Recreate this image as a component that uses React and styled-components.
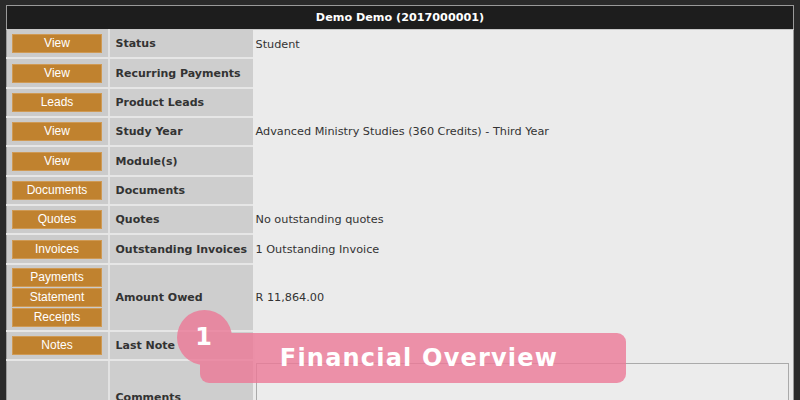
import styled, { createGlobalStyle } from 'styled-components';

const GlobalStyle = createGlobalStyle`
  html, body {
    margin: 0;
    padding: 0;
    background: #2a2a2a;
  }
  body {
    font-family: "DejaVu Sans", Verdana, sans-serif;
  }
`;

const rows = [
    { buttons: ['View'], label: 'Status', value: 'Student' },
    { buttons: ['View'], label: 'Recurring Payments', value: '' },
    { buttons: ['Leads'], label: 'Product Leads', value: '' },
    { buttons: ['View'], label: 'Study Year', value: 'Advanced Ministry Studies (360 Credits) - Third Year' },
    { buttons: ['View'], label: 'Module(s)', value: '' },
    { buttons: ['Documents'], label: 'Documents', value: '' },
    { buttons: ['Quotes'], label: 'Quotes', value: 'No outstanding quotes' },
    { buttons: ['Invoices'], label: 'Outstanding Invoices', value: '1 Outstanding Invoice' },
    { buttons: ['Payments', 'Statement', 'Receipts'], label: 'Amount Owed', value: 'R 11,864.00' },
    { buttons: ['Notes'], label: 'Last Note', value: '' },
]

const Page = styled.div`
    position: relative;
    width: 800px;
    height: 400px;
    overflow: hidden;
    padding: 5px 6px 0;
    box-sizing: border-box;
`;

const Table = styled.table`
    width: 100%;
    table-layout: fixed;
    border-collapse: collapse;
    border: 1px solid #9a9a9a;
    border-bottom: none;
    color: #333;
`;

const Col = styled.col`
    width: ${p => p.$w ? p.$w + 'px' : 'auto'};
`;

const Header = styled.th`
    background: #1d1d1d;
    color: #fff;
    font-weight: bold;
    font-size: 11.2px;
    height: 23px;
    padding: 0;
    text-align: center;
    border-bottom: 1px solid #c8c8c8;
`;

const ButtonCell = styled.td`
    background: #cbcbcb;
    border-bottom: 2px solid #e6e6e6;
    border-right: 2px solid #e2e2e2;
    padding: 0 0 0 5px;
    height: 27.35px;
    vertical-align: middle;
`;

const LabelCell = styled.td`
    background: #cecece;
    border-bottom: 2px solid #e6e6e6;
    padding: ${p => p.$top ? '30px 0 0 6px' : '0 0 0 6px'};
    vertical-align: ${p => p.$top ? 'top' : 'middle'};
    font-weight: bold;
    font-size: 11px;
    color: #333;
    white-space: nowrap;
`;

const ValueCell = styled.td`
    background: #ebebeb;
    padding: 0 0 0 3px;
    color: #333;
    font-size: 11.25px;
    white-space: nowrap;
`;

const ButtonStack = styled.div`
    display: flex;
    flex-direction: column;
    gap: 1px;
    padding: ${p => p.$multi ? '3px 0' : '0'};
`;

const OrangeButton = styled.div`
    width: 88px;
    height: 17px;
    line-height: 17px;
    background: #c0822f;
    border: 1px solid #cf9a55;
    color: #fff;
    font-family: "Liberation Sans", Arial, sans-serif;
    font-size: 12px;
    text-align: center;
`;

const CommentBox = styled.div`
    margin: 3px 4px 0 0;
    height: 60px;
    border: 1px solid #aaa;
    background: #ececec;
`;

const Callout = styled.div`
    position: absolute;
    left: 177px;
    top: 310px;
    width: 450px;
    height: 74px;
`;

const Shapes = styled.div`
    position: absolute;
    inset: 0;
    opacity: 0.8;
`;

const Circle = styled.div`
    position: absolute;
    left: 0;
    top: 0;
    width: 55px;
    height: 55px;
    border-radius: 50%;
    background: #ec7997;
`;

const Bar = styled.div`
    position: absolute;
    left: 23px;
    top: 23px;
    width: 426px;
    height: 50px;
    border-radius: 9px;
    background: #ec7997;
`;

const Number = styled.div`
    position: absolute;
    left: 0;
    top: 0;
    width: 53px;
    height: 53px;
    display: flex;
    align-items: center;
    justify-content: center;
    color: #fff;
    font-weight: bold;
    font-size: 24px;
`;

const Title = styled.div`
    position: absolute;
    left: 23px;
    top: 23px;
    width: 426px;
    height: 50px;
    display: flex;
    align-items: center;
    justify-content: center;
    padding: 0 0 0 12px;
    box-sizing: border-box;
    color: #fff;
    font-weight: bold;
    font-size: 24px;
    letter-spacing: 1.2px;
`;

export default function App() {
    return (
        <Page>
            <GlobalStyle />
            <Table>
                <colgroup>
                    <Col $w={102} />
                    <Col $w={144} />
                    <Col />
                </colgroup>
                <thead>
                    <tr>
                        <Header colSpan={3}>Demo Demo (2017000001)</Header>
                    </tr>
                </thead>
                <tbody>
                    {rows.map((row) => (
                        <tr key={row.label}>
                            <ButtonCell>
                                <ButtonStack $multi={row.buttons.length > 1}>
                                    {row.buttons.map((b) => <OrangeButton key={b}>{b}</OrangeButton>)}
                                </ButtonStack>
                            </ButtonCell>
                            <LabelCell>{row.label}</LabelCell>
                            <ValueCell>{row.value}</ValueCell>
                        </tr>
                    ))}
                    <tr>
                        <ButtonCell />
                        <LabelCell $top>Comments</LabelCell>
                        <ValueCell>
                            <CommentBox />
                        </ValueCell>
                    </tr>
                </tbody>
            </Table>
            {/* tutorial callout sits on top of the table */}
            <Callout>
                <Shapes>
                    <Circle />
                    <Bar />
                </Shapes>
                <Number>1</Number>
                <Title>Financial Overview</Title>
            </Callout>
        </Page>
    )
}
